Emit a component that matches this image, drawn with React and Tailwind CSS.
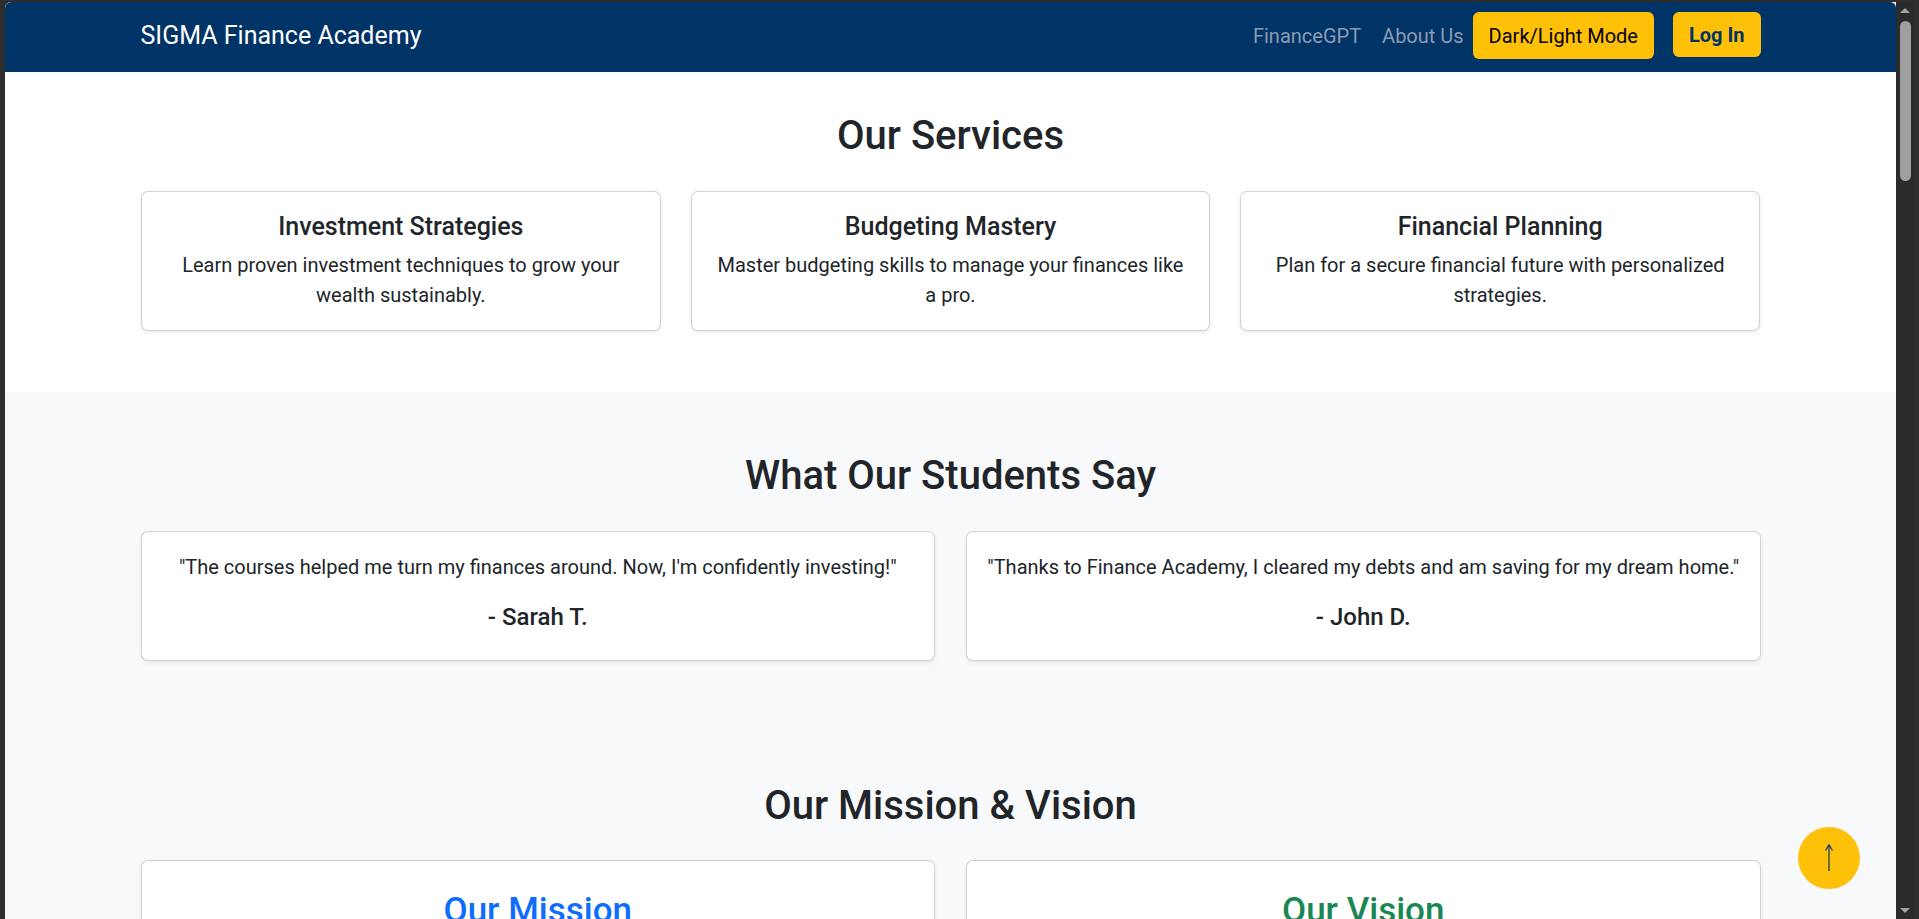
const services = [
  {
    title: 'Investment Strategies',
    text: 'Learn proven investment techniques to grow your wealth sustainably.',
  },
  {
    title: 'Budgeting Mastery',
    text: 'Master budgeting skills to manage your finances like a pro.',
  },
  {
    title: 'Financial Planning',
    text: 'Plan for a secure financial future with personalized strategies.',
  },
];

const testimonials = [
  {
    quote: '"The courses helped me turn my finances around. Now, I\'m confidently investing!"',
    name: '- Sarah T.',
  },
  {
    quote: '"Thanks to Finance Academy, I cleared my debts and am saving for my dream home."',
    name: '- John D.',
  },
];

const cardClass =
  'rounded-[7px] border border-[rgba(0,0,0,0.175)] bg-white text-center shadow-[0_2px_4px_rgba(0,0,0,0.075)]';

function Navbar() {
  return (
    <nav className="h-[70px] shrink-0 rounded-t-[6px] bg-[#003366] pt-[10px]">
      <div className="mx-auto flex h-[47px] w-[1620px] items-start justify-between">
        <a className="mt-[9px] text-[25px] leading-[30px] text-white" href="#">
          SIGMA Finance Academy
        </a>
        <div className="flex items-start">
          <a className="mt-[9px] text-[20px] leading-[30px] text-[#8c9cb1]" href="#">
            FinanceGPT
          </a>
          <a className="ml-[21px] mt-[9px] text-[20px] leading-[30px] text-[#8c9cb1]" href="#">
            About Us
          </a>
          <button
            type="button"
            className="ml-[9px] h-[47px] rounded-[6px] bg-[#ffc107] px-[16px] text-[20px] leading-[30px] text-black"
          >
            Dark/Light Mode
          </button>
          <button
            type="button"
            className="ml-[19px] h-[45px] rounded-[6px] bg-[#ffc107] px-[16px] text-[20px] font-bold leading-[30px] text-[#003366]"
          >
            Log In
          </button>
        </div>
      </div>
    </nav>
  );
}

function SectionTitle({ children, className = 'mb-[31px]' }) {
  return <h2 className={`${className} text-center text-[40px] font-medium leading-[48px] text-[#212529]`}>{children}</h2>;
}

function Scrollbar() {
  return (
    <div className="relative w-[18px] shrink-0 bg-[#2b2b2b]">
      <div className="mx-auto mt-[6px] h-0 w-0 border-x-[5px] border-b-[5px] border-x-transparent border-b-[#a3a3a3]" />
      <div className="mx-auto mt-[8px] h-[160px] w-[11px] rounded-full bg-[#9f9f9f]" />
      <div className="absolute bottom-[6px] left-[4px] h-0 w-0 border-x-[5px] border-t-[5px] border-x-transparent border-t-[#a3a3a3]" />
    </div>
  );
}

export default function App() {
  return (
    <div
      className="flex h-[919px] w-full overflow-hidden bg-[#2e2e2e] pt-[2px] pl-[5px] pr-[5px]"
      style={{ fontFamily: 'Roboto, "Liberation Sans", sans-serif' }}
    >
      <div className="relative flex min-w-0 flex-1 flex-col overflow-hidden rounded-tl-[6px] bg-[#f8f9fa] text-[#212529]">
        <Navbar />

        <section className="bg-white pb-[61px] pt-[40px]">
          <SectionTitle>Our Services</SectionTitle>
          <div className="mx-auto grid w-[1619px] grid-cols-3 gap-[30px]">
            {services.map((item) => (
              <div key={item.title} className={`${cardClass} p-[20px]`}>
                <h5 className="mb-[8px] text-[25px] font-medium leading-[30px]">{item.title}</h5>
                <p className="text-[20px] leading-[30px]">{item.text}</p>
              </div>
            ))}
          </div>
        </section>

        <section className="pb-[61px] pt-[60px]">
          <SectionTitle>What Our Students Say</SectionTitle>
          <div className="mx-auto grid w-[1620px] grid-cols-2 gap-[31px]">
            {testimonials.map((item) => (
              <div key={item.name} className={`${cardClass} p-[20px]`}>
                <p className="whitespace-nowrap text-[20px] leading-[30px]">{item.quote}</p>
                <h5 className="mb-[8px] mt-[21px] text-[24px] font-medium leading-[28.8px]">{item.name}</h5>
              </div>
            ))}
          </div>
        </section>

        <section className="pt-[60px]">
          <SectionTitle className="mb-[30px]">Our Mission &amp; Vision</SectionTitle>
          <div className="mx-auto grid w-[1620px] grid-cols-2 gap-[31px]">
            <div className={`${cardClass} h-[200px] px-[20px] pt-[29px]`}>
              <h3 className="text-[35px] font-medium leading-[42px] text-[#0d6efd]">Our Mission</h3>
            </div>
            <div className={`${cardClass} h-[200px] px-[20px] pt-[29px]`}>
              <h3 className="text-[35px] font-medium leading-[42px] text-[#198754]">Our Vision</h3>
            </div>
          </div>
        </section>

        <button
          type="button"
          aria-label="Back to top"
          className="absolute bottom-[30px] right-[36px] flex h-[62px] w-[62px] items-center justify-center rounded-full bg-[#ffc107]"
        >
          <svg width="12" height="30" viewBox="0 0 12 30" fill="none" stroke="#1f3b63" strokeWidth="1.3">
            <path d="M6 2 V28" />
            <path d="M2.5 7.5 L6 1.8 L9.5 7.5" strokeLinejoin="round" />
          </svg>
        </button>
      </div>
      <Scrollbar />
    </div>
  );
}
